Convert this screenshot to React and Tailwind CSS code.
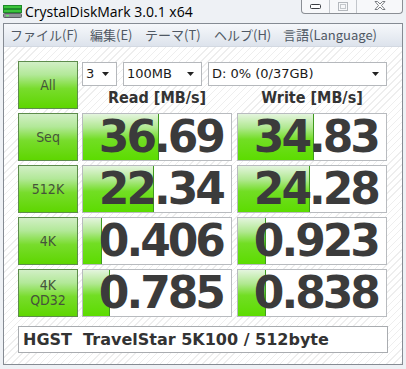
import React from 'react';

const rows = [
    { label: 'Seq', read: '36.69', write: '34.83', rw: 76, ww: 76 },
    { label: '512K', read: '22.34', write: '24.28', rw: 71, ww: 72 },
    { label: '4K', read: '0.406', write: '0.923', rw: 19, ww: 28 },
    { label: '4K\nQD32', read: '0.785', write: '0.838', rw: 27, ww: 28 },
];

const menu = [
    { text: 'ファイル(F)', w: 'w-[80px]' },
    { text: '編集(E)', w: 'w-[55px]' },
    { text: 'テーマ(T)', w: 'w-[69px]' },
    { text: 'ヘルプ(H)', w: 'w-[69px]' },
    { text: '言語(Language)', w: 'w-[100px]' },
];

function AppIcon() {
    return (
        <svg width="19" height="13" viewBox="0 0 19 13">
            <rect x="0.5" y="0.5" width="18" height="3" fill="#3cc43c" stroke="#1f8a2a" />
            <rect x="0.5" y="4.5" width="18" height="3" fill="#3cc43c" stroke="#1f8a2a" />
            <rect x="0.5" y="8.5" width="18" height="4" rx="1" fill="#8d9196" stroke="#5b5f63" />
            <rect x="3" y="10" width="3" height="1.5" fill="#6fe26f" />
        </svg>
    );
}

function WindowButtons() {
    return (
        <div className="absolute right-[3px] top-0 flex h-[14px] border border-t-0 border-[#8b8f95] rounded-b-[4px] bg-[#f7f8fa] overflow-hidden">
            <div className="w-[28px] flex items-center justify-center border-r border-[#c2c6cb]">
                <svg width="11" height="5" viewBox="0 0 11 5"><rect x="0.5" y="0.5" width="10" height="4" rx="1" fill="#fff" stroke="#3a3d42" /></svg>
            </div>
            <div className="w-[27px] flex items-center justify-center border-r border-[#c2c6cb]">
                <svg width="10" height="9" viewBox="0 0 10 9"><rect x="0.5" y="0.5" width="9" height="8" fill="none" stroke="#b4b8bd" /><rect x="2.5" y="2.5" width="5" height="4" fill="none" stroke="#c4c8cc" /></svg>
            </div>
            <div className="w-[45px] flex items-start justify-center pt-[1px]">
                <svg width="12" height="9" viewBox="0 0 12 9">
                    <path d="M1 0.5 H3.5 L6 3 L8.5 0.5 H11 L7.5 4.5 L11 8.5 H8.5 L6 6 L3.5 8.5 H1 L4.5 4.5 Z" fill="#fff" stroke="#6b6f75" strokeWidth="0.9" strokeLinejoin="round" />
                </svg>
            </div>
        </div>
    );
}

function Select({ w, text }) {
    return (
        <div className={`${w} h-[24px] bg-white border border-[#b5b8bc] flex items-center justify-between pl-[3px] pr-[7px] text-[13px] text-[#1a1a1a] font-['DejaVu_Sans',sans-serif]`}>
            <span>{text}</span>
            <svg width="7" height="4" viewBox="0 0 7 4"><path d="M0 0 H7 L3.5 4 Z" fill="#222" /></svg>
        </div>
    );
}

function TestButton({ label }) {
    return (
        <div className="w-[60px] h-[48px] shrink-0 border border-[#5d8c4c] bg-[linear-gradient(to_bottom,#d2efc6_0%,#b2e898_28%,#78dc2c_58%,#5ed600_100%)] flex items-center justify-center text-center whitespace-pre-line leading-[15px] text-[14px] text-[#45543a] font-['DejaVu_Sans_Condensed','DejaVu_Sans',sans-serif]">
            {label}
        </div>
    );
}

function Result({ value, bar }) {
    return (
        <div className="relative w-[150px] h-[48px] bg-white border border-[#b8bbbf] flex items-center justify-end pr-[8px]">
            <div
                className="absolute left-0 top-0 bottom-0 border-r border-[#3f9a1e] bg-[linear-gradient(to_bottom,#e4f5de_0%,#b0e890_30%,#72de24_55%,#5cdc00_100%)]"
                style={{ width: bar }}
            />
            <span className="relative text-[44px] leading-none font-bold tracking-[-3px] text-[#3b3b3b] font-['DejaVu_Sans',sans-serif]">
                {value}
            </span>
        </div>
    );
}

export default function App() {
    return (
        <div className="w-[406px] h-[369px] relative overflow-hidden bg-[#eef1f5] font-['Noto_Sans','Noto_Sans_CJK_JP',sans-serif]">
            <div className="h-[23px] flex items-center pl-[3px] gap-[3px]">
                <AppIcon />
                <span className="text-[14px] text-black leading-none font-['Open_Sans',sans-serif]">CrystalDiskMark 3.0.1 x64</span>
            </div>
            <WindowButtons />

            <div className="mx-[3px] h-[342px] border border-[#858b93] flex flex-col">
                <div className="h-[23px] shrink-0 flex items-center pl-[6px] border-b border-[#d3d9e2] bg-[linear-gradient(to_bottom,#f6f8fb,#dde3ec)] text-[13px] text-[#4f5864] font-['Noto_Sans_CJK_JP',sans-serif]">
                    {menu.map((m) => (
                        <span key={m.text} className={`${m.w} shrink-0 whitespace-nowrap`}>{m.text}</span>
                    ))}
                </div>

                <div className="flex-1 pl-[14px] pt-[14px] bg-[repeating-linear-gradient(135deg,#ffffff_0px,#ffffff_4px,#eeeeee_4px,#eeeeee_5px)]">
                    <div className="flex gap-[4px]">
                        <TestButton label="All" />
                        <div className="flex flex-col">
                            <div className="flex gap-[6px] mt-[1px]">
                                <Select w="w-[35px]" text="3" />
                                <Select w="w-[79px]" text="100MB" />
                                <Select w="w-[179px]" text="D: 0% (0/37GB)" />
                            </div>
                            <div className="flex gap-[5px] h-[23px] items-center text-[16px] font-bold text-[#333] font-['DejaVu_Sans_Condensed','DejaVu_Sans',sans-serif] font-stretch-condensed">
                                <div className="w-[150px] text-center">Read [MB/s]</div>
                                <div className="w-[150px] text-center">Write [MB/s]</div>
                            </div>
                        </div>
                    </div>

                    <div className="flex flex-col gap-[4px] mt-[4px]">
                        {rows.map((r) => (
                            <div key={r.label} className="flex">
                                <TestButton label={r.label} />
                                <div className="flex gap-[5px] ml-[4px]">
                                    <Result value={r.read} bar={r.rw} />
                                    <Result value={r.write} bar={r.ww} />
                                </div>
                            </div>
                        ))}
                    </div>

                    <div className="mt-[9px] w-[370px] h-[27px] bg-white border border-[#a9acb0] flex items-center pl-[4px] text-[16px] font-bold text-[#333] whitespace-pre font-['DejaVu_Sans',sans-serif]">
                        {'HGST  TravelStar 5K100 / 512byte'}
                    </div>
                </div>
            </div>
        </div>
    );
}
